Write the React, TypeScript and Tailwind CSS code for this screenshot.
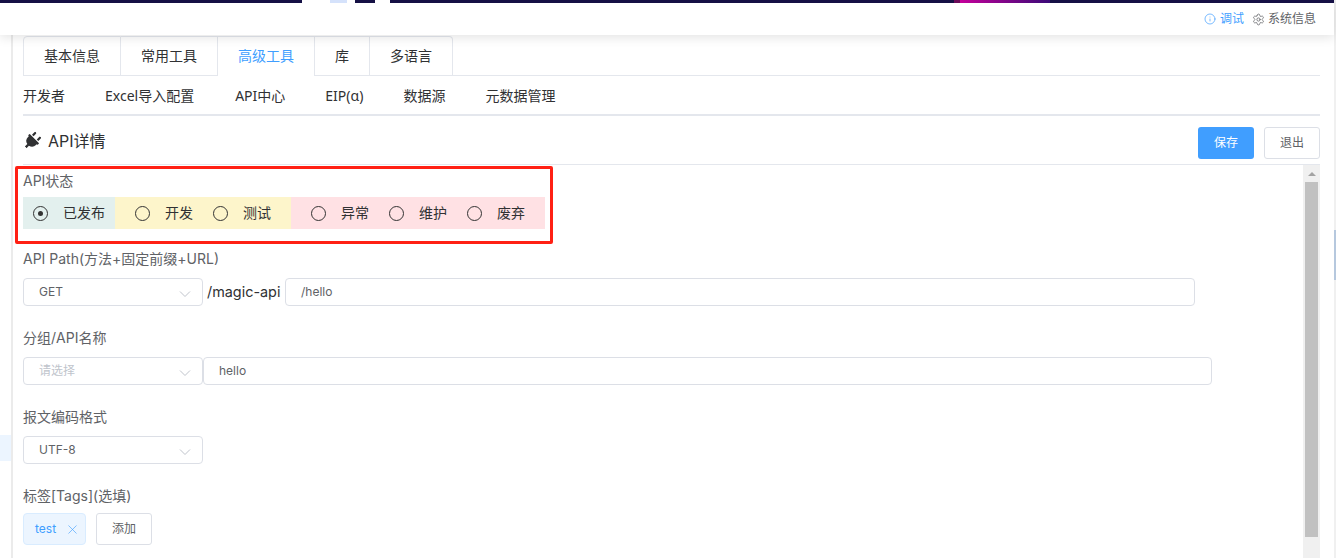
import { FaPlug } from "react-icons/fa";
import { Info, Settings, X } from "lucide-react";

const Chevron = () => (
  <svg width="12" height="8" viewBox="0 0 12 8" className="absolute right-[11px] top-[11px]" fill="none">
    <path d="M1 1.5 6 6.5 11 1.5" stroke="#c0c4cc" strokeWidth="1" />
  </svg>
);

const Select = ({ value, placeholder }: { value: string; placeholder?: boolean }) => (
  <div className={`relative flex h-[28px] w-[180px] shrink-0 items-center rounded-[4px] border border-[#dcdfe6] pl-[15px] text-[12px] ${placeholder ? "text-[#c0c4cc]" : "text-[#606266]"}`}>
    {value}
    <Chevron />
  </div>
);

const Input = ({ value, width }: { value: string; width: string }) => (
  <div className={`flex h-[28px] items-center rounded-[4px] border border-[#dcdfe6] pl-[15px] text-[12px] text-[#606266] ${width}`}>
    {value}
  </div>
);

const Radio = ({ label, checked }: { label: string; checked?: boolean }) => (
  <div className="flex items-center gap-[15px] text-[14px] leading-none text-[#303133]">
    <span className="flex h-[15px] w-[15px] items-center justify-center rounded-full border border-[#333]">
      {checked && <span className="h-[5px] w-[5px] rounded-full bg-[#333]" />}
    </span>
    <span>{label}</span>
  </div>
);

const Label = ({ children, className }: { children: string; className: string }) => (
  <div className={`h-[20px] text-[14px] leading-[20px] text-[#606266] ${className}`}>{children}</div>
);

export default function App() {
  return (
    <div className="relative flex h-[558px] w-[1336px] overflow-hidden bg-white font-['Inter','Noto_Sans_CJK_SC',sans-serif]">
      <div className="flex min-w-0 flex-1 flex-col">
        <header className="relative z-10 shrink-0 bg-white shadow-[0_2px_12px_rgba(0,0,0,0.12)]">
          <div className="flex h-[3px]">
            <div className="w-[302px] bg-[#151045]" />
            <div className="w-[28px] bg-white" />
            <div className="w-[17px] bg-[#d5e2fb]" />
            <div className="w-[8px] bg-white" />
            <div className="w-[20px] bg-[#151045]" />
            <div className="w-[15px] bg-white" />
            <div className="w-[564px] bg-[#151045]" />
            <div className="w-[6px] bg-[#6c0a58]" />
            <div className="w-[90px] bg-[linear-gradient(90deg,#c4009a,#3b0a78)]" />
            <div className="flex-1 bg-[#151045]" />
          </div>
          <div className="flex h-[32px] items-center justify-end pr-[18px] text-[12px]">
            <Info size={12} strokeWidth={1.4} className="text-[#409eff]" />
            <span className="ml-[4px] text-[#409eff]">调试</span>
            <Settings size={13} strokeWidth={1.4} className="ml-[8px] text-[#606266]" />
            <span className="ml-[3px] text-[#606266]">系统信息</span>
          </div>
        </header>

        <div className="flex min-h-0 flex-1">
          <aside className="flex w-[13px] shrink-0 flex-col border-r-2 border-[#ebebeb] bg-white pt-[400px]">
            <div className="h-[26px] bg-[#ecf5ff]" />
          </aside>

          <main className="flex min-w-0 flex-1 flex-col pl-[10px] pr-[14px] pt-[1px]">
            <nav className="flex h-[40px] shrink-0 border-b border-[#e4e7ed] text-[14px] text-[#303133]">
              <div className="flex h-[40px] w-[98px] items-center justify-center rounded-tl-[4px] border border-[#e4e7ed] pb-[1px]">基本信息</div>
              <div className="flex h-[40px] w-[97px] items-center justify-center border-y border-r border-[#e4e7ed] pb-[1px]">常用工具</div>
              <div className="flex h-[40px] w-[97px] items-center justify-center border-t border-r border-[#e4e7ed] bg-white pb-[2px] text-[#409eff]">高级工具</div>
              <div className="flex h-[40px] w-[55px] items-center justify-center border-y border-r border-[#e4e7ed] pb-[1px]">库</div>
              <div className="flex h-[40px] w-[83px] items-center justify-center rounded-tr-[4px] border-y border-r border-[#e4e7ed] pb-[1px]">多语言</div>
            </nav>

            <nav className="flex h-[40px] shrink-0 items-center gap-[40px] border-b-2 border-[#e4e7ed] font-['Noto_Sans','Noto_Sans_CJK_SC',sans-serif] text-[14px] text-[#303133]">
              <span>开发者</span>
              <span className="mr-[1px]">Excel导入配置</span>
              <span>API中心</span>
              <span>EIP(α)</span>
              <span>数据源</span>
              <span>元数据管理</span>
            </nav>

            <div className="flex h-[49px] shrink-0 items-center justify-between border-b border-[#e4e7ed] pb-[3px] pt-[8px]">
              <div className="mb-[3px] flex items-center text-[16px] text-[#303133]">
                <FaPlug size={18} className="rotate-45" />
                <span className="ml-[7px]">API详情</span>
              </div>
              <div className="flex gap-[10px] text-[12px]">
                <button className="h-[32px] w-[56px] rounded-[3px] bg-[#409eff] text-white">保存</button>
                <button className="h-[32px] w-[56px] rounded-[3px] border border-[#dcdfe6] bg-white text-[#606266]">退出</button>
              </div>
            </div>

            <div className="flex min-h-0 flex-1">
              <section className="min-w-0 flex-1">
                <Label className="mt-[6px]">API状态</Label>
                <div className="mt-[6px] flex h-[32px] w-[522px]">
                  <div className="flex w-[92px] items-center bg-[#e3f0ee] pl-[10px]">
                    <Radio label="已发布" checked />
                  </div>
                  <div className="flex w-[176px] items-center gap-[20px] bg-[#fdf5cb] pl-[20px]">
                    <Radio label="开发" />
                    <Radio label="测试" />
                  </div>
                  <div className="flex flex-1 items-center gap-[20px] bg-[#ffe1e4] pl-[20px]">
                    <Radio label="异常" />
                    <Radio label="维护" />
                    <Radio label="废弃" />
                  </div>
                </div>

                <Label className="mt-[20px]">API Path(方法+固定前缀+URL)</Label>
                <div className="mt-[9px] flex items-center">
                  <Select value="GET" />
                  <span className="ml-[4px] w-[78px] text-[14.4px] text-[#303133]">/magic-api</span>
                  <Input value="/hello" width="w-[910px]" />
                </div>

                <Label className="mt-[22px]">分组/API名称</Label>
                <div className="mt-[9px] flex items-center">
                  <Select value="请选择" placeholder />
                  <Input value="hello" width="w-[1009px]" />
                </div>

                <Label className="mt-[22px]">报文编码格式</Label>
                <div className="mt-[9px]">
                  <Select value="UTF-8" />
                </div>

                <Label className="mt-[22px]">标签[Tags](选填)</Label>
                <div className="mt-[7px] flex gap-[10px]">
                  <div className="flex h-[32px] w-[63px] items-center rounded-[4px] border border-[#d9ecff] bg-[#ecf5ff] pl-[11px] text-[12px] text-[#409eff]">
                    test
                    <X size={15} strokeWidth={1} className="ml-[9px]" />
                  </div>
                  <button className="h-[32px] w-[56px] rounded-[3px] border border-[#dcdfe6] bg-white text-[12px] text-[#606266]">添加</button>
                </div>
              </section>

              <div className="flex w-[17px] shrink-0 flex-col items-center bg-[#f0f0f0]">
                <div className="flex h-[17px] w-full items-center justify-center">
                  <span className="h-0 w-0 border-x-[4px] border-b-[4px] border-x-transparent border-b-[#a3a3a3]" />
                </div>
                <div className="h-[355px] w-[13px] bg-[#c1c1c1]" />
              </div>
            </div>
          </main>
        </div>
      </div>

      <div className="w-[2px] shrink-0 bg-[#f0f0f0] pt-[230px]">
        <div className="h-[50px] bg-[#b6c8de]" />
      </div>

      <div className="pointer-events-none absolute left-[15px] top-[166px] z-20 h-[78px] w-[538px] rounded-[2px] border-[3px] border-[#ff2014]" />
    </div>
  );
}
